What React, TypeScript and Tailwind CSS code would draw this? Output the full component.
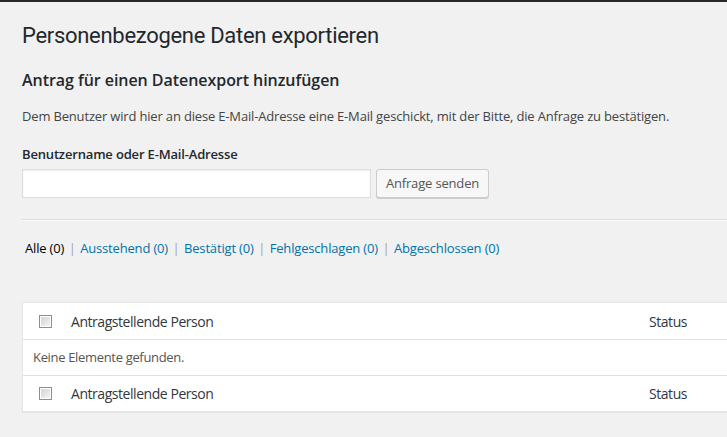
import React from 'react';

const font = "font-['Open_Sans','Noto_Sans',sans-serif]";

function Checkbox() {
  return (
    <div className="w-[13px] h-[13px] border border-[#8e8e8e] bg-white p-[1px]">
      <div className="w-full h-full bg-gradient-to-br from-[#d4d4d4] to-[#f4f4f4]" />
    </div>
  );
}

function HeaderRow({ border }: { border?: boolean }) {
  return (
    <div className={`flex items-center h-[36px] text-[14px] tracking-[-0.45px] text-[#32373c] ${border ? 'border-t border-[#e1e1e1]' : ''}`}>
      <div className="w-[48px] flex pl-[16px]">
        <Checkbox />
      </div>
      <div className="w-[568px]">Antragstellende Person</div>
      <div className="flex-1 pl-[10px]">Status</div>
    </div>
  );
}

export default function App() {
  const filters = [
    { label: 'Ausstehend', count: 0 },
    { label: 'Bestätigt', count: 0 },
    { label: 'Fehlgeschlagen', count: 0 },
    { label: 'Abgeschlossen', count: 0 },
  ];

  return (
    <div className={`min-h-screen w-full overflow-hidden bg-[#f1f1f1] border-t-2 border-[#23282d] ${font} text-[13px] tracking-[-0.17px] text-[#444]`}>
      <div className="pl-[22px] pt-[19px]">
        <h1 className="font-['Roboto',sans-serif] text-[22px] leading-[29px] tracking-[-0.3px] font-normal text-[#23282d]">
          Personenbezogene Daten exportieren
        </h1>

        <h2 className="mt-[19px] text-[16px] leading-[22px] tracking-[-0.05px] font-semibold text-[#23282d]">
          Antrag für einen Datenexport hinzufügen
        </h2>

        <p className="mt-[16px] leading-[18px]">
          Dem Benutzer wird hier an diese E-Mail-Adresse eine E-Mail geschickt, mit der Bitte, die Anfrage zu bestätigen.
        </p>

        <label className="block mt-[20px] leading-[18px] font-semibold text-[#23282d]">
          Benutzername oder E-Mail-Adresse
        </label>

        <div className="mt-[6px] flex items-start gap-[5px]">
          <input
            type="text"
            className="w-[349px] h-[29px] bg-white border border-[#ddd] shadow-[inset_0_1px_2px_rgba(0,0,0,0.07)] outline-none px-2"
          />
          <button className="w-[113px] h-[29px] bg-[#f7f7f7] border border-[#ccc] rounded-[3px] shadow-[0_1px_0_#ccc] text-[#555] text-[13px]">
            Anfrage senden
          </button>
        </div>

        <div className="mt-[21px] border-t border-[#ddd] border-b border-b-[#fafafa]" />

        <div className="mt-[18px] pl-[3px] leading-[18px] flex items-center">
          <span className="text-black">Alle (0)</span>
          {filters.map((f) => (
            <span key={f.label} className="flex items-center">
              <span className="text-[#a0a5aa] mx-[4.5px]">|</span>
              <span className="text-[#0073aa]">
                {f.label} ({f.count})
              </span>
            </span>
          ))}
        </div>

        <div className="mt-[45px] w-[900px] bg-white border border-[#e5e5e5] shadow-[0_1px_1px_rgba(0,0,0,0.04)]">
          <HeaderRow />
          <div className="h-[36px] flex items-center border-t border-[#e1e1e1] pl-[10px] text-[13px] tracking-[-0.33px] text-[#555]">
            Keine Elemente gefunden.
          </div>
          <HeaderRow border />
        </div>
      </div>
    </div>
  );
}
